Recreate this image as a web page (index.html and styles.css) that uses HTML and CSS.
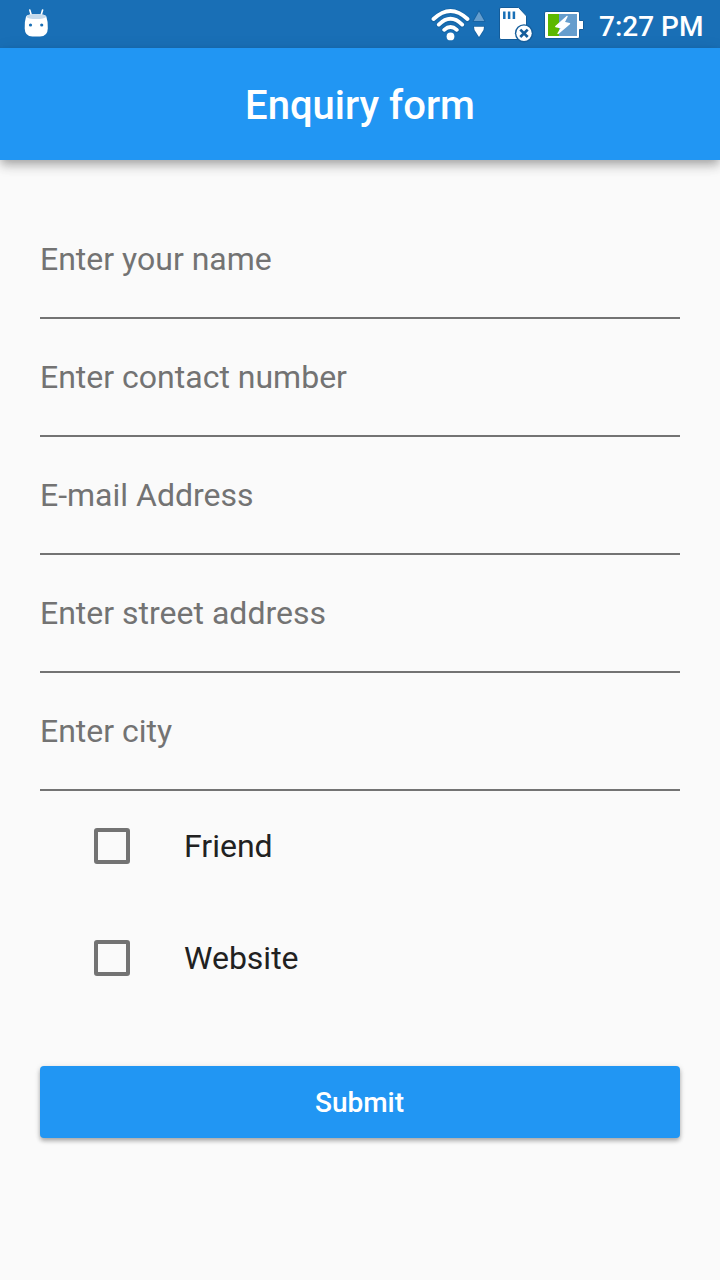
FILE: index.html
```html
<!DOCTYPE html>
<html lang="en">
<head>
<meta charset="utf-8">
<title>Enquiry form</title>
<link rel="stylesheet" href="styles.css">
</head>
<body>
<div class="status-bar">
  <svg class="android" width="28" height="32" viewBox="0 0 28 32">
    <path d="M7.8 2 9.4 7.5M20.6 2 19 7.5" stroke="#fff" stroke-width="1.6" stroke-linecap="round"/>
    <path d="M4 8.7Q5 6 14.2 6T24.4 8.7Q26.2 14 25.8 20.5Q25.6 28.4 18 28.4H10.4Q2.9 28.4 2.7 20.5Q2.3 14 4 8.7Z" fill="#fff"/>
    <path d="M4 8.7Q5 6 14.2 6T24.4 8.7Q22.4 11 14.2 11T4 8.7Z" fill="#c5daec"/>
    <circle cx="8.5" cy="17" r="1.6" fill="#196fb6"/><circle cx="19.7" cy="17" r="1.6" fill="#196fb6"/>
  </svg>
  <div class="status-right">
    <svg class="wifi" width="56" height="40" viewBox="430 4 56 40">
      <g fill="none" stroke="#135e9c" stroke-width="5.6" stroke-linecap="round" opacity=".55">
        <path d="M433.5 19.5Q450.5 3 467.5 19.5M439 25Q450.5 13.5 462 25M444.2 30Q450.5 24 456.8 30"/>
      </g>
      <g fill="none" stroke="#fff" stroke-width="3.8" stroke-linecap="round">
        <path d="M433.5 19Q450.5 2.8 467.5 19M438.8 24.6Q450.5 13 462.2 24.6M444.2 29.8Q450.5 24 456.8 29.8"/>
      </g>
      <circle cx="450.5" cy="36.4" r="3.9" fill="#fff"/>
      <path class="arrow" d="M479 11.5 484.3 21H473.7Z" fill="#659dcd"/>
      <path class="arrow" d="M474 26.8H484L483.5 30 479 37 474.5 30Z" fill="#fff"/>
    </svg>
    <svg class="sd" width="36" height="40" viewBox="498 4 36 40">
      <path d="M501 7.5H518.5L526.5 16V38Q526.5 39.5 525 39.5H501Q499.5 39.5 499.5 38V9Q499.5 7.5 501 7.5Z" fill="#fff" stroke="#145c99"/>
      <path d="M504.3 11.5V19M509.1 11.5V19M513.9 11.5V19" stroke="#196fb6" stroke-width="2.5"/>
      <circle cx="524" cy="33.3" r="9.1" fill="#165e9b"/>
      <circle cx="524" cy="33.3" r="7.7" fill="#fff"/>
      <path d="M520.3 29.6 527.7 37M527.7 29.6 520.3 37" stroke="#165e9b" stroke-width="2.7"/>
    </svg>
    <svg class="battery" width="42" height="32" viewBox="543 9 42 32">
      <path d="M546 11.5H578Q579.5 11.5 579.5 13V20.5H583.5V29.5H579.5V37Q579.5 38.5 578 38.5H546Q544.5 38.5 544.5 37V13Q544.5 11.5 546 11.5Z" fill="#fff" stroke="#145c99"/>
      <path d="M548 14H559V36H548Z" fill="#5cb800"/>
      <path d="M559 14H577V36H559Z" fill="#659dcd"/>
      <path d="M567 16.5 555.8 26.5 561.5 27.8 558 33.5 569.5 23.7 564 22.5Z" fill="#fff" stroke="#fff" stroke-width="1.4" stroke-linejoin="round"/>
    </svg>
    <span class="clock">7:27 PM</span>
  </div>
</div>
<header class="app-bar"><h1 class="title">Enquiry form</h1></header>
<form class="form">
  <label class="field">Enter your name</label>
  <label class="field">Enter contact number</label>
  <label class="field">E-mail Address</label>
  <label class="field">Enter street address</label>
  <label class="field">Enter city</label>
  <div class="options">
    <label class="option"><span class="box"></span>Friend</label>
    <label class="option"><span class="box"></span>Website</label>
  </div>
  <button class="submit" type="button">Submit</button>
</form>
</body>
</html>
```
FILE: styles.css
```css
* { box-sizing: border-box; }
body {
  margin: 0;
  height: 1280px;
  overflow: hidden;
  background: #fafafa;
  font-family: Roboto, "Liberation Sans", sans-serif;
}
svg { display: block; fill: none; }
.status-bar {
  display: flex;
  justify-content: space-between;
  height: 48px;
  padding: 0 16px 0 22px;
  background: #196fb6;
}
.android { margin-top: 8px; }
.status-right { display: flex; align-items: flex-start; }
.wifi, .sd { margin-top: 4px; }
.sd { margin-left: 12px; }
.arrow { stroke: #1762a1; paint-order: stroke; stroke-width: 1.6px; }
.battery { margin: 9px 14px 0 9px; }
.clock {
  width: 105px;
  color: #fff;
  font-size: 28px;
  font-weight: 500;
  line-height: 53px;
  white-space: nowrap;
}
.app-bar {
  display: flex;
  align-items: center;
  justify-content: center;
  height: 112px;
  background: #2196f3;
  box-shadow: 0 4px 8px -2px rgba(0,0,0,.18), 0 7px 10px rgba(0,0,0,.16), 0 2px 16px rgba(0,0,0,.08);
}
.title {
  margin: 0;
  padding-top: 2px;
  color: #fff;
  font-size: 40px;
  font-weight: 500;
}
.form { padding: 41px 40px 0; }
.field {
  display: block;
  height: 118px;
  padding-top: 39px;
  border-bottom: 2px solid #737373;
  color: #737373;
  font-size: 32px;
  line-height: 38px;
}
.option {
  display: flex;
  align-items: center;
  gap: 54px;
  height: 112px;
  padding-left: 54px;
  color: #212121;
  font-size: 32px;
}
.options { margin-top: -1px; }
.box {
  width: 36px;
  height: 36px;
  border: 4px solid #737373;
  border-radius: 3px;
}
.submit {
  display: block;
  width: 100%;
  height: 72px;
  margin-top: 52px;
  padding: 1px 1px 0 0;
  border: 0;
  border-radius: 4px;
  background: #2196f3;
  box-shadow: 0 3px 4px rgba(0,0,0,.28), 0 1px 6px rgba(0,0,0,.1);
  color: #fff;
  font: 500 28px Roboto, "Liberation Sans", sans-serif;
}
```
